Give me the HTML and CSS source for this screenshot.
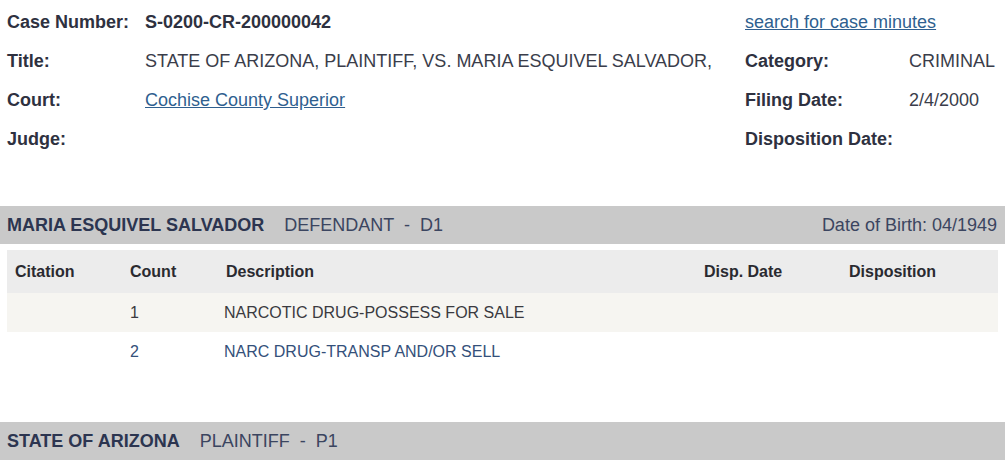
FILE: index.html
```html
<!DOCTYPE html>
<html>
<head>
<meta charset="utf-8">
<link rel="stylesheet" href="styles.css">
</head>
<body>
<div class="info">
  <div class="lbl">Case Number:</div>
  <div class="val strong">S-0200-CR-200000042</div>
  <div class="rlink"><a href="#">search for case minutes</a></div>

  <div class="lbl">Title:</div>
  <div class="val">STATE OF ARIZONA, PLAINTIFF, VS. MARIA ESQUIVEL SALVADOR,</div>
  <div class="lbl">Category:</div>
  <div class="val">CRIMINAL</div>

  <div class="lbl">Court:</div>
  <div class="val"><a href="#">Cochise County Superior</a></div>
  <div class="lbl">Filing Date:</div>
  <div class="val">2/4/2000</div>

  <div class="lbl">Judge:</div>
  <div class="val"></div>
  <div class="lbl">Disposition Date:</div>
  <div class="val"></div>
</div>

<div class="party first">
  <div class="party-name"><span class="pname">MARIA ESQUIVEL SALVADOR</span><span class="prole">DEFENDANT &nbsp;-&nbsp; D1</span></div>
  <div class="dob">Date of Birth: 04/1949</div>
</div>

<div class="charges">
  <div class="crow head">
    <div>Citation</div><div>Count</div><div>Description</div><div>Disp. Date</div><div>Disposition</div>
  </div>
  <div class="crow odd">
    <div></div><div>1</div><div>NARCOTIC DRUG-POSSESS FOR SALE</div><div></div><div></div>
  </div>
  <div class="crow even">
    <div></div><div>2</div><div>NARC DRUG-TRANSP AND/OR SELL</div><div></div><div></div>
  </div>
</div>

<div class="party second">
  <div class="party-name"><span class="pname">STATE OF ARIZONA</span><span class="prole">PLAINTIFF &nbsp;-&nbsp; P1</span></div>
</div>
</body>
</html>
```
FILE: styles.css
```css
html, body {
  margin: 0;
  padding: 0;
  background: #ffffff;
}
body {
  font-family: "Liberation Sans", Arial, sans-serif;
  font-size: 18px;
  color: #3a3d4a;
  width: 1006px;
  overflow: hidden;
}
a {
  color: #2f5f8f;
  text-decoration: underline;
}
.info {
  display: grid;
  grid-template-columns: 138px 600px 164px auto;
  grid-auto-rows: 39px;
  padding: 3px 0 0 7px;
  align-items: center;
}
.lbl {
  font-weight: bold;
  color: #2e3140;
}
.val {
  color: #3a3d4a;
}
.val.strong {
  font-weight: bold;
  color: #2e3140;
}
.rlink {
  grid-column: 3 / span 2;
}
.party {
  display: flex;
  justify-content: space-between;
  align-items: center;
  background: #c9c9c9;
  height: 38px;
  padding: 0 8px 0 7px;
  width: 990px;
}
.party.first {
  margin-top: 47px;
}
.party.second {
  margin-top: 51px;
}
.pname {
  font-weight: bold;
  color: #2c3550;
  margin-right: 20px;
}
.prole {
  color: #3b4560;
}
.dob {
  color: #3b4560;
}
.charges {
  margin: 6px 0 0 7px;
  width: 991px;
  font-size: 16px;
}
.crow {
  display: grid;
  grid-template-columns: 115px 96px 478px 145px auto;
  align-items: center;
  height: 39px;
  padding-left: 8px;
}
.crow.head {
  height: 43px;
  background: #ececec;
  font-weight: bold;
  color: #2a2a30;
}
.crow.odd {
  background: #f6f5f1;
  color: #3a3a40;
}
.crow.even {
  background: #ffffff;
  color: #34507a;
}
.crow.odd > div:nth-child(3),
.crow.even > div:nth-child(3) {
  margin-left: -2px;
}
```
